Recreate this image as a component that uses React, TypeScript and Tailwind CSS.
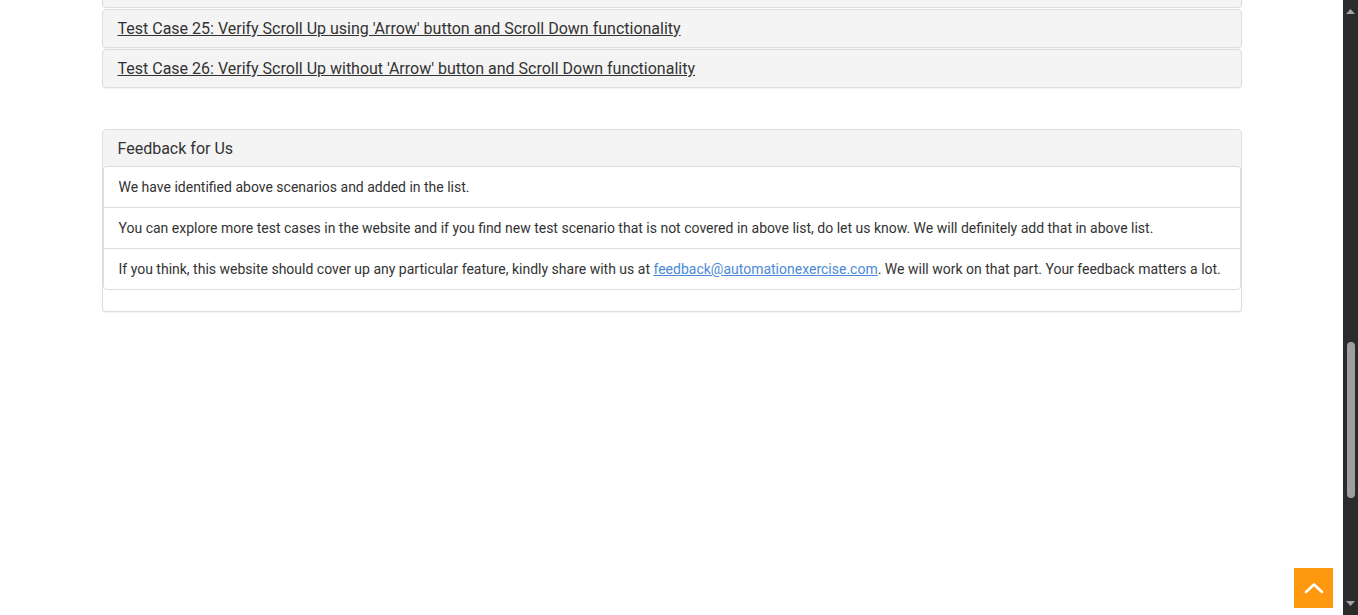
const feedback = [
  "We have identified above scenarios and added in the list.",
  "You can explore more test cases in the website and if you find new test scenario that is not covered in above list, do let us know. We will definitely add that in above list.",
];

const cases = [
  "Test Case 25: Verify Scroll Up using 'Arrow' button and Scroll Down functionality",
  "Test Case 26: Verify Scroll Up without 'Arrow' button and Scroll Down functionality",
];

export default function App() {
  return (
    <div className="flex h-[615px] w-full overflow-hidden bg-white font-['Roboto',sans-serif] text-[#333]">
      <main className="relative flex-1">
        <div className="mx-auto w-[1140px]">
          <div className="h-[8px] rounded-b-[4px] border-x border-b border-[#ddd] bg-[#f4f4f4]" />
          {cases.map((c) => (
            <div
              key={c}
              className="mt-px h-[39px] rounded-[4px] border border-[#ddd] bg-[#f4f4f4] px-[15px] py-[7px] shadow-[0_1px_1px_rgba(0,0,0,0.05)]"
            >
              <a href="#" className="text-[16px] leading-[22px] text-[#333] underline">
                {c}
              </a>
            </div>
          ))}

          <div className="mt-[41px] rounded-[4px] border border-[#ddd] bg-white pb-[21px] shadow-[0_1px_1px_rgba(0,0,0,0.05)]">
            <div className="h-[36px] rounded-t-[4px] bg-[#f4f4f4] px-[15px] pt-[8px] text-[16px] leading-[22px] text-[#333]">
              Feedback for Us
            </div>
            <ul className="text-[14px] leading-[20px]">
              {feedback.map((f) => (
                <li key={f} className="border-x border-t border-[#ddd] px-[15px] py-[10px] first:rounded-t-[4px]">
                  {f}
                </li>
              ))}
              <li className="rounded-b-[4px] border border-[#ddd] px-[15px] py-[10px]">
                If you think, this website should cover up any particular feature, kindly share with us at{" "}
                <a href="#" className="text-[#4a8ad8] underline">
                  feedback@automationexercise.com
                </a>
                . We will work on that part. Your feedback matters a lot.
              </li>
            </ul>
          </div>
        </div>

        <a
          href="#"
          className="absolute bottom-[7px] right-[10px] flex h-[40px] w-[39px] items-center justify-center bg-[#fe980f]"
        >
          <svg width="20" height="12" viewBox="0 0 20 12" fill="none">
            <path d="M2 10 L10 2.5 L18 10" stroke="white" strokeWidth="2.6" strokeLinecap="round" strokeLinejoin="round" />
          </svg>
        </a>
      </main>

      {/* fake browser scrollbar */}
      <div className="flex w-[15px] flex-col items-center bg-[#2b2b2b]">
        <svg className="mt-[9px]" width="9" height="5" viewBox="0 0 9 5">
          <path d="M0 5 L4.5 0 L9 5 Z" fill="#a3a3a3" />
        </svg>
        <div className="mt-[328px] h-[156px] w-[8px] rounded-full bg-[#9e9e9e]" />
        <div className="flex-1" />
        <svg className="mb-[9px]" width="9" height="5" viewBox="0 0 9 5">
          <path d="M0 0 L9 0 L4.5 5 Z" fill="#a3a3a3" />
        </svg>
      </div>
    </div>
  );
}
